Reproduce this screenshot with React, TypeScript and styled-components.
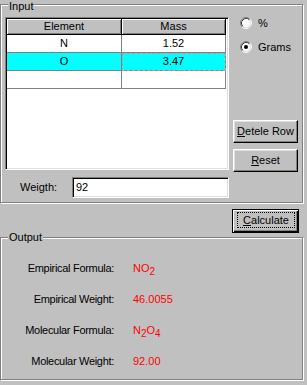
import React from 'react';
import styled, { createGlobalStyle } from 'styled-components';

const GlobalStyle = createGlobalStyle`
  html, body { margin: 0; padding: 0; background: #c0c0c0; }
  body { font-family: "Liberation Sans", Arial, sans-serif; font-size: 11px; color: #000; }
  * { box-sizing: border-box; }
`;

const Page = styled.div`
  width: 307px;
  height: 385px;
  padding-top: 4px;
  display: flex;
  flex-direction: column;
  background: #c0c0c0;
  overflow: hidden;
`;

const Group = styled.div<{ $h: number }>`
  position: relative;
  width: 303px;
  height: ${p => p.$h}px;
  border: 1px solid #808080;
  box-shadow: 1px 1px 0 #fff, inset 1px 1px 0 #fff;
  flex: none;
`;

const Legend = styled.span<{ $top?: number }>`
  position: absolute;
  top: ${p => p.$top ?? -5}px;
  left: 7px;
  padding: 0 1px;
  height: 9px;
  line-height: 9px;
  background: #c0c0c0;
`;

const InputBody = styled.div`
  display: flex;
  padding: 12px 0 0 4px;
`;

const LeftCol = styled.div`
  display: flex;
  flex-direction: column;
  width: 224px;
`;

const Grid = styled.div`
  width: 224px;
  height: 153px;
  border: 1px solid;
  border-color: #808080 #fff #fff #808080;
  box-shadow: inset 1px 1px 0 #000, inset -1px -1px 0 #dfdfdf;
  padding: 1px;
  background: #fff;
  display: flex;
  flex-direction: column;
`;

const Row = styled.div`
  display: grid;
  grid-template-columns: 115px 104px;
`;

const HeadCell = styled.div`
  height: 16px;
  background: #c0c0c0;
  border-right: 1px solid #000;
  border-bottom: 1px solid #000;
  box-shadow: inset 1px 1px 0 #fff, inset -1px -1px 0 #808080;
  display: flex;
  align-items: center;
  justify-content: center;
  line-height: 13px;
`;

const Cell = styled.div<{ $sel?: boolean; $focus?: boolean }>`
  height: 18px;
  background: ${p => (p.$sel ? '#00ffff' : '#fff')};
  border-right: 1px solid #808080;
  border-bottom: 1px solid #808080;
  display: flex;
  align-items: center;
  justify-content: center;
  line-height: 13px;
  outline: ${p => (p.$focus ? '1px dashed #c09898' : 'none')};
  outline-offset: -1px;
`;

const WeightRow = styled.div`
  display: flex;
  align-items: center;
  margin-top: 7px;
  padding-left: 15px;
`;

const WeightLabel = styled.span`
  width: 52px;
  line-height: 13px;
`;

const TextBox = styled.div`
  width: 157px;
  height: 21px;
  border: 1px solid;
  border-color: #808080 #fff #fff #808080;
  box-shadow: inset 1px 1px 0 #000, inset -1px -1px 0 #dfdfdf;
  background: #fff;
  padding: 0 0 0 3px;
  display: flex;
  align-items: center;
  line-height: 13px;
`;

const RightCol = styled.div`
  display: flex;
  flex-direction: column;
  margin-left: 4px;
`;

const RadioRow = styled.div<{ $gap?: number }>`
  display: flex;
  align-items: center;
  gap: 6px;
  height: 12px;
  padding-left: 7px;
  margin-top: ${p => p.$gap ?? 0}px;
  line-height: 13px;
`;

const Button = styled.div<{ $top: number }>`
  width: 65px;
  height: 23px;
  margin-top: ${p => p.$top}px;
  background: #c0c0c0;
  border: 1px solid;
  border-color: #fff #000 #000 #fff;
  box-shadow: inset -1px -1px 0 #808080, inset 1px 1px 0 #dfdfdf;
  display: flex;
  align-items: center;
  justify-content: center;
  line-height: 13px;
  padding-bottom: 1px;
`;

const CalcRow = styled.div`
  display: flex;
  justify-content: flex-end;
  padding-right: 8px;
  margin-top: 6px;
`;

const DefaultButton = styled.div`
  width: 67px;
  height: 24px;
  background: #c0c0c0;
  border: 1px solid #000;
  box-shadow: inset 1px 1px 0 #fff, inset -1px -1px 0 #000, inset -2px -2px 0 #808080;
  display: flex;
  padding: 2px 3px 4px 4px;
`;

const FocusRect = styled.span`
  flex: 1;
  border: 1px dotted #000;
  display: flex;
  align-items: center;
  justify-content: center;
  line-height: 13px;
`;

const OutputWrap = styled.div`
  margin-top: 4px;
`;

const OutputBody = styled.div`
  display: grid;
  grid-template-columns: 113px auto;
  grid-auto-rows: 31px;
  column-gap: 19px;
  padding-top: 15px;
  align-items: center;
`;

const OutLabel = styled.span`
  text-align: right;
  line-height: 13px;
  letter-spacing: -0.3px;
`;

const OutValue = styled.span`
  color: #ff0000;
  line-height: 13px;
`;

const Sub = styled.sub`
  font-size: 10px;
  vertical-align: -3px;
  line-height: 0;
`;

const Radio: React.FC<{ checked?: boolean }> = ({ checked }) => (
  <svg width="12" height="12" viewBox="0 0 12 12">
    <circle cx="6" cy="6" r="4.5" fill="#fff" />
    <path d="M2.11 9.89 A5.5 5.5 0 0 1 9.89 2.11" fill="none" stroke="#808080" strokeWidth="1" />
    <path d="M9.89 2.11 A5.5 5.5 0 0 1 2.11 9.89" fill="none" stroke="#fff" strokeWidth="1" />
    <path d="M2.82 9.18 A4.5 4.5 0 0 1 9.18 2.82" fill="none" stroke="#404040" strokeWidth="1" />
    <path d="M9.18 2.82 A4.5 4.5 0 0 1 2.82 9.18" fill="none" stroke="#dfdfdf" strokeWidth="1" />
    {checked && <circle cx="6" cy="6" r="2" fill="#000" />}
  </svg>
);

const rows = [
  { el: 'N', mass: '1.52', sel: false },
  { el: 'O', mass: '3.47', sel: true },
  { el: '', mass: '', sel: false },
];

export default function App() {
  return (
    <Page>
      <GlobalStyle />
      <Group $h={199}>
        <Legend $top={-3}>Input</Legend>
        <InputBody>
          <LeftCol>
            <Grid>
              <Row>
                <HeadCell>Element</HeadCell>
                <HeadCell>Mass</HeadCell>
              </Row>
              {rows.map((r, i) => (
                <Row key={i}>
                  <Cell $sel={r.sel}>{r.el}</Cell>
                  <Cell $sel={r.sel} $focus={r.sel}>{r.mass}</Cell>
                </Row>
              ))}
            </Grid>
            <WeightRow>
              <WeightLabel>Weigth:</WeightLabel>
              <TextBox>92</TextBox>
            </WeightRow>
          </LeftCol>
          <RightCol>
            <RadioRow>
              <Radio />
              <span>%</span>
            </RadioRow>
            <RadioRow $gap={12}>
              <Radio checked />
              <span>Grams</span>
            </RadioRow>
            <Button $top={67}>
              <span><u>D</u>etele Row</span>
            </Button>
            <Button $top={6}>
              <span><u>R</u>eset</span>
            </Button>
          </RightCol>
        </InputBody>
      </Group>
      <CalcRow>
        <DefaultButton>
          <FocusRect><span><u>C</u>alculate</span></FocusRect>
        </DefaultButton>
      </CalcRow>
      <OutputWrap>
        <Group $h={143}>
          <Legend>Output</Legend>
          <OutputBody>
            <OutLabel>Empirical Formula:</OutLabel>
            <OutValue>NO<Sub>2</Sub></OutValue>
            <OutLabel>Empirical Weight:</OutLabel>
            <OutValue>46.0055</OutValue>
            <OutLabel>Molecular Formula:</OutLabel>
            <OutValue>N<Sub>2</Sub>O<Sub>4</Sub></OutValue>
            <OutLabel>Molecular Weight:</OutLabel>
            <OutValue>92.00</OutValue>
          </OutputBody>
        </Group>
      </OutputWrap>
    </Page>
  );
}
